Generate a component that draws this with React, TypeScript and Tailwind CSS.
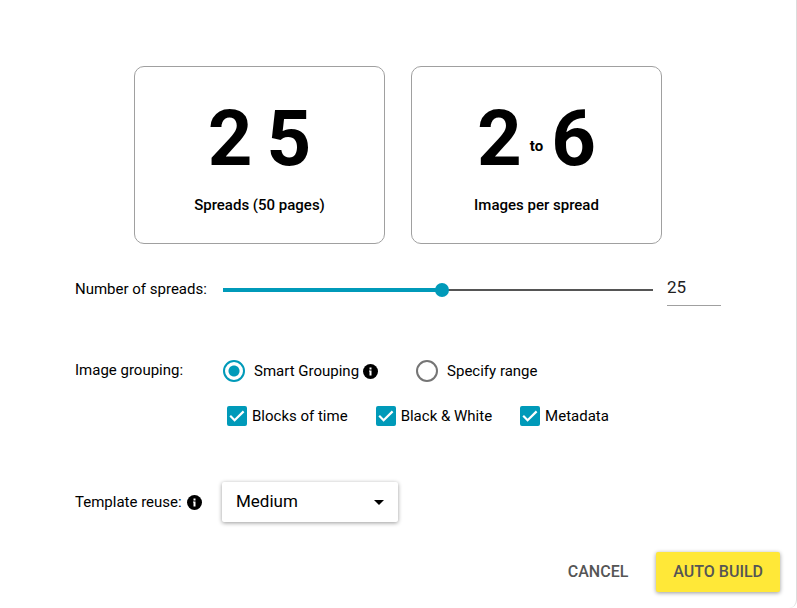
import { useState } from 'react'
import type { ReactNode } from 'react'

const MIN_SPREADS = 1
const MAX_SPREADS = 48

const GROUPINGS = [
  { id: 'smart', label: 'Smart Grouping', info: true },
  { id: 'range', label: 'Specify range', info: false },
]

const CRITERIA = ['Blocks of time', 'Black & White', 'Metadata']

function InfoIcon() {
  return (
    <svg viewBox="0 0 15 15" className="size-[15px]" aria-hidden="true">
      <circle cx="7.5" cy="7.5" r="7.5" />
      <path d="M6.5 3.4h2v2h-2zM6 6.4h2.5v5h-2V7.6H6z" fill="#fff" />
    </svg>
  )
}

function SummaryCard({ children, caption }: { children: ReactNode; caption: string }) {
  return (
    <section className="flex flex-1 flex-col items-center rounded-[10px] border border-[#a0a0a0] pt-8 pb-[26px]">
      <div className="flex items-center text-[78px] leading-20 font-bold">{children}</div>
      <p className="mt-[14px] font-medium">{caption}</p>
    </section>
  )
}

function Radio({ label, checked, onChange }: { label: string; checked: boolean; onChange: () => void }) {
  return (
    <label className="flex items-center gap-[9px]">
      <input
        type="radio"
        name="grouping"
        checked={checked}
        onChange={onChange}
        className="size-[22px] appearance-none rounded-full border-2 border-[#757575] checked:border-[#009ab9] checked:bg-[radial-gradient(circle,#009ab9_5px,transparent_6px)]"
      />
      {label}
    </label>
  )
}

function Checkbox({ label }: { label: string }) {
  return (
    <label className="flex items-center gap-[5px]">
      <span className="grid size-5">
        <input
          type="checkbox"
          defaultChecked
          className="peer col-start-1 row-start-1 size-5 appearance-none rounded-xs border-2 border-[#757575] checked:border-[#009ab9] checked:bg-[#009ab9]"
        />
        <svg
          viewBox="0 0 20 20"
          className="pointer-events-none invisible col-start-1 row-start-1 size-5 peer-checked:visible"
          fill="none"
          stroke="#fff"
          strokeWidth="2.2"
        >
          <path d="M3.2 9.8 7.6 14.2 16.6 5.4" />
        </svg>
      </span>
      {label}
    </label>
  )
}

export default function App() {
  const [spreads, setSpreads] = useState(25)
  const [grouping, setGrouping] = useState('smart')
  const filled = ((spreads - MIN_SPREADS) / (MAX_SPREADS - MIN_SPREADS)) * 100

  return (
    <main className="flex min-h-screen flex-col rounded-b-lg border-r border-[#dcdcdc] bg-white font-['Roboto',sans-serif] text-[15px] leading-6 text-black">
      <div className="flex gap-[26px] px-[134px] pt-[66px]">
        <SummaryCard caption={`Spreads (${spreads * 2} pages)`}>
          <div className="flex gap-[14px]">
            {String(spreads).split('').map((digit, i) => (
              <span key={i}>{digit}</span>
            ))}
          </div>
        </SummaryCard>
        <SummaryCard caption="Images per spread">
          <span>2</span>
          <span className="mx-2 mt-[14px] text-[15px] leading-6">to</span>
          <span>6</span>
        </SummaryCard>
      </div>

      <div className="grid grid-cols-[148px_1fr] items-center px-[75px] pt-[30px]">
        <label htmlFor="spreads" className="pb-0.5">
          Number of spreads:
        </label>
        <div className="flex items-center gap-[14px]">
          <input
            id="spreads"
            type="range"
            min={MIN_SPREADS}
            max={MAX_SPREADS}
            value={spreads}
            onChange={(e) => setSpreads(Number(e.target.value))}
            style={{ backgroundSize: `${filled}% 4px, 100% 2px` }}
            className="h-[14px] min-w-0 flex-1 appearance-none bg-[linear-gradient(#009ab9,#009ab9),linear-gradient(#555,#555)] bg-left bg-no-repeat [&::-webkit-slider-thumb]:size-[14px] [&::-webkit-slider-thumb]:appearance-none [&::-webkit-slider-thumb]:rounded-full [&::-webkit-slider-thumb]:bg-[#009ab9]"
          />
          <input
            type="text"
            aria-label="Spread count"
            value={spreads}
            onChange={(e) => setSpreads(Number(e.target.value) || MIN_SPREADS)}
            className="h-8 w-[54px] border-b border-[#a0a0a0] pb-1.5 text-[17px] text-[#212121]"
          />
        </div>
      </div>

      <div className="grid grid-cols-[148px_1fr] items-center px-[75px] pt-[52px]">
        <span id="grouping-label" className="pb-0.5">
          Image grouping:
        </span>
        <div role="radiogroup" aria-labelledby="grouping-label" className="flex items-center gap-[38px]">
          {GROUPINGS.map(({ id, label, info }) => (
            <div key={id} className="flex items-center gap-1">
              <Radio label={label} checked={grouping === id} onChange={() => setGrouping(id)} />
              {info && <InfoIcon />}
            </div>
          ))}
        </div>
        <div className="col-start-2 flex gap-7 pt-5 pl-1">
          {CRITERIA.map((label) => (
            <Checkbox key={label} label={label} />
          ))}
        </div>
      </div>

      <div className="grid grid-cols-[147px_1fr] items-center px-[75px] pt-[54px]">
        <div className="flex items-center gap-[5px]">
          <label htmlFor="reuse">Template reuse:</label>
          <InfoIcon />
        </div>
        <div className="grid w-[176px] items-center">
          <select
            id="reuse"
            defaultValue="Medium"
            className="col-start-1 row-start-1 h-10 appearance-none rounded-xs bg-white px-[14px] pb-0.5 text-[17px] shadow-[0_1px_4px_rgba(0,0,0,0.4)]"
          >
            <option>Low</option>
            <option>Medium</option>
            <option>High</option>
          </select>
          <svg
            viewBox="0 0 10 5"
            className="pointer-events-none col-start-1 row-start-1 mr-[14px] h-[5px] w-[10px] justify-self-end"
          >
            <path d="M0 0h10L5 5z" />
          </svg>
        </div>
      </div>

      <footer className="mt-auto flex justify-end gap-3 pr-4 pb-4 text-base font-medium text-[#555]">
        <button type="button" className="h-10 px-4">
          CANCEL
        </button>
        <button
          type="button"
          className="h-10 rounded-xs bg-[#ffe838] px-[17px] shadow-[0_1px_4px_rgba(0,0,0,0.4)]"
        >
          AUTO BUILD
        </button>
      </footer>
    </main>
  )
}
